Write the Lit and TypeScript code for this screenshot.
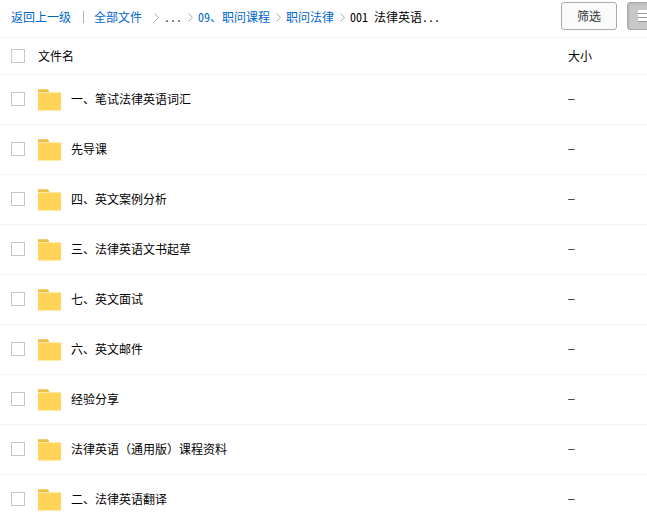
import { LitElement, html, css, svg } from "lit";
import { customElement, property } from "lit/decorators.js";

const folderIcon = svg`
  <svg class="folder" width="23" height="24" viewBox="0 -2 23 24" aria-hidden="true" shape-rendering="crispEdges">
    <path d="M0 0h10v1h1v3H0z" fill="#f3cf72" />
    <path d="M0 1h10v1h1v2H0z" fill="#edbf46" />
    <path d="M0 3h23v19H0z" fill="#ffe9a9" />
    <path d="M0 4h23v17H0z" fill="#ffd459" />
    <path d="M0 2h11v1H0z" fill="#edbf46" />
  </svg>`;

@customElement("crumb-trail")
class CrumbTrail extends LitElement {
  static styles = css`
    :host { display: block; min-width: 0; }
    nav { display: flex; align-items: center; white-space: nowrap; font-feature-settings: "hwid"; }
    a { color: #0066cc; text-decoration: none; }
    a:hover { text-decoration: underline; }
    .bar { width: 1px; height: 12px; margin: 0 10px 0 12px; background: #b4b4b4; }
    .root { margin-right: 6px; }
    .arrow { flex: none; margin: 0 5px 0 6px; }
    .more { color: #333; }
    .current { color: #000; white-space: pre; }
  `;

  arrow() {
    return html`<svg class="arrow" width="5" height="9" viewBox="0 0 5 9" aria-hidden="true">
      <path d="M.5 .5L4.5 4.5L.5 8.5" fill="none" stroke="#aaa" />
    </svg>`;
  }

  render() {
    return html`<nav aria-label="路径">
      <a href="#up">返回上一级</a><span class="bar"></span>
      <a class="root" href="#all">全部文件</a>${this.arrow()}
      <span class="more">...</span>${this.arrow()}
      <a href="#course">09、职问课程</a>${this.arrow()}
      <a href="#law">职问法律</a>${this.arrow()}
      <span class="current">001 法律英语...</span>
    </nav>`;
  }
}

@customElement("file-table")
class FileTable extends LitElement {
  @property({ attribute: false }) files: string[] = [];

  static styles = css`
    :host { display: block; }
    table { width: 100%; table-layout: fixed; border-collapse: separate; border-spacing: 0; }
    th, td {
      box-sizing: border-box; padding: 0; text-align: left; font-weight: normal;
      vertical-align: middle; border-bottom: 1px solid #f2f2f2; color: #000;
    }
    th { height: 37px; }
    td { height: 50px; padding-bottom: 1px; }
    .pick { width: 38px; padding-left: 11px; }
    .size { width: 79px; }
    .box {
      appearance: none; display: block; box-sizing: border-box; width: 14px; height: 14px;
      margin: 0; border: 1px solid #c6c6c6; background: #fff;
    }
    .box:checked { background: #0066cc; }
    .name { display: flex; align-items: center; gap: 10px; cursor: pointer; }
    .folder { flex: none; }
    .dash { display: block; font-family: "Liberation Sans", Arial, sans-serif; color: #444; }
  `;

  render() {
    return html`<table>
      <thead>
        <tr>
          <th class="pick"><input class="box" type="checkbox" aria-label="全选" /></th>
          <th>文件名</th>
          <th class="size">大小</th>
        </tr>
      </thead>
      <tbody>
        ${this.files.map((name, i) => html`<tr>
          <td class="pick"><input class="box" type="checkbox" id="file-${i}" /></td>
          <td><label class="name" for="file-${i}">${folderIcon}<span>${name}</span></label></td>
          <td class="size"><span class="dash">–</span></td>
        </tr>`)}
      </tbody>
    </table>`;
  }
}

@customElement("app-root")
class AppRoot extends LitElement {
  static styles = css`
    :host {
      display: block; max-height: 100vh; overflow: hidden; background: #fff;
      font: 12px/16px "Noto Sans CJK SC", "Liberation Sans", sans-serif;
    }
    .top {
      display: flex; align-items: flex-start; justify-content: space-between;
      border-bottom: 1px solid #f2f2f2; padding: 2px 0 7px 11px;
    }
    .trail { padding-top: 7px; }
    .tools { display: flex; flex: none; gap: 10px; margin-right: -16px; }
    button { box-sizing: border-box; height: 28px; padding: 0; border-radius: 3px; font: inherit; cursor: pointer; }
    .filter { width: 56px; border: 1px solid #aaa; background: #fafafa; color: #333; }
    .view {
      display: flex; align-items: center; width: 36px; padding-left: 10px;
      border: 1px solid #aaa; background: #c8c8c8; box-shadow: inset 1px 1px 2px #b4b4b4;
    }
  `;

  files = [
    "一、笔试法律英语词汇",
    "先导课",
    "四、英文案例分析",
    "三、法律英语文书起草",
    "七、英文面试",
    "六、英文邮件",
    "经验分享",
    "法律英语（通用版）课程资料",
    "二、法律英语翻译",
  ];

  render() {
    return html`
      <header class="top">
        <crumb-trail class="trail"></crumb-trail>
        <div class="tools">
          <button class="filter" type="button">筛选</button>
          <button class="view" type="button" aria-label="列表视图">
            <svg width="14" height="12" viewBox="0 0 14 12" aria-hidden="true" shape-rendering="crispEdges">
              <path d="M0 0h14v12H0z" fill="#fff" />
              <path d="M0 3h14v1H0zM0 7h14v1H0zM0 11h14v1H0z" fill="#999" />
            </svg>
          </button>
        </div>
      </header>
      <file-table .files=${this.files}></file-table>
    `;
  }
}
